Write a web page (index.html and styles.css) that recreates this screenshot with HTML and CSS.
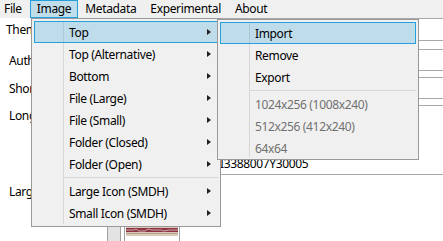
FILE: index.html
```html
<!DOCTYPE html>
<html lang="en">
<head>
  <meta charset="UTF-8">
  <meta name="viewport" content="width=device-width, initial-scale=1.0">
  <title>Theme Editor</title>
  <link rel="stylesheet" href="styles.css">
</head>
<body>
  <div class="window">
    <div class="menubar">
      <div class="menubar-item first">File</div>
      <div class="menubar-item open">Image</div>
      <div class="menubar-item">Metadata</div>
      <div class="menubar-item">Experimental</div>
      <div class="menubar-item">About</div>
    </div>

    <div class="form">
      <div class="row row-theme">
        <div class="label label-theme">Theme</div>
        <div class="field"></div>
      </div>
      <div class="row row-author">
        <div class="label">Author</div>
        <div class="field"></div>
      </div>
      <div class="row row-short">
        <div class="label">Short</div>
        <div class="field"></div>
      </div>
      <div class="row row-long">
        <div class="label">Long</div>
        <div class="field field-multi">
          <span class="code">I3388007Y30005</span>
        </div>
      </div>
      <div class="row row-icon-label">
        <div class="label">Large</div>
      </div>
      <div class="row row-icons">
        <div class="icon-small"></div>
        <div class="icon-large">
          <svg width="52" height="9" viewBox="0 0 52 9">
            <rect width="52" height="9" fill="#d9cbb8"/>
            <rect y="1" width="52" height="4" fill="#8e3444"/>
            <path d="M0 3h8l2-1 3 2h6l3-2 4 1h9l3 1 5-1h9" stroke="#c9a9a4" stroke-width="1" fill="none"/>
            <rect y="6" width="52" height="1" fill="#b89a90"/>
          </svg>
        </div>
      </div>
    </div>

    <!-- Image menu -->
    <div class="popup popup-main">
      <div class="item active">Top<span class="arrow"></span></div>
      <div class="item">Top (Alternative)<span class="arrow"></span></div>
      <div class="item">Bottom<span class="arrow"></span></div>
      <div class="item">File (Large)<span class="arrow"></span></div>
      <div class="item">File (Small)<span class="arrow"></span></div>
      <div class="item">Folder (Closed)<span class="arrow"></span></div>
      <div class="item">Folder (Open)<span class="arrow"></span></div>
      <div class="separator"></div>
      <div class="item">Large Icon (SMDH)<span class="arrow"></span></div>
      <div class="item">Small Icon (SMDH)<span class="arrow"></span></div>
    </div>

    <!-- Top submenu -->
    <div class="popup popup-sub">
      <div class="item active">Import</div>
      <div class="item">Remove</div>
      <div class="item">Export</div>
      <div class="separator"></div>
      <div class="item disabled">1024x256 (1008x240)</div>
      <div class="item disabled">512x256 (412x240)</div>
      <div class="item disabled">64x64</div>
    </div>
  </div>
</body>
</html>
```

FILE: styles.css
```css
body {
  margin: 0;
  font-family: "Noto Sans", "Open Sans", sans-serif;
  font-size: 12px;
  letter-spacing: -0.35px;
  color: #000000;
  background-color: #ffffff;
}
.window {
  position: relative;
  width: 443px;
  height: 241px;
  overflow: hidden;
  background-color: #ffffff;
}

/* menu bar */
.menubar {
  display: flex;
  height: 18px;
  background-color: #f0f0f0;
}
.menubar-item {
  line-height: 16px;
  padding: 0 6px;
  border: 1px solid transparent;
  white-space: nowrap;
}
.menubar-item.first {
  padding-left: 3px;
  padding-right: 7px;
}
.menubar-item.open {
  background-color: #c0ddeb;
  border-color: #26a0da;
}

/* form behind the menus */
.form {
  display: flex;
  flex-direction: column;
}
.row {
  display: flex;
  align-items: center;
}
.label {
  width: 95px;
  padding-left: 9px;
  white-space: nowrap;
}
.label-theme {
  padding-left: 6px;
  width: 98px;
}
.field {
  flex: 1;
  align-self: stretch;
  margin-right: -20px;
  border: 1px solid #a9a9a9;
}
.row-theme {
  height: 23px;
}
.row-author {
  height: 22px;
  margin-top: 8px;
}
.row-short {
  height: 22px;
  margin-top: 6px;
}
.row-long {
  height: 70px;
  margin-top: 6px;
  align-items: flex-start;
}
.row-long .label {
  line-height: 22px;
}
.field-multi {
  display: flex;
  align-items: flex-end;
  padding-bottom: 3px;
}
.code {
  padding-left: 115px;
  line-height: 14px;
}
.row-icon-label {
  height: 22px;
  margin-top: 5px;
}
.row-icons {
  margin-top: 23px;
  padding-left: 107px;
  align-items: flex-start;
  gap: 3px;
}
.icon-small {
  width: 12px;
  height: 20px;
  border: 1px solid #a0a0a0;
  background-color: #e3e3e3;
}
.icon-large {
  width: 52px;
  height: 20px;
  padding: 1px;
  border: 1px solid #a0a0a0;
  background-color: #ffffff;
}
.icon-large svg {
  display: block;
}

/* dropdown popups */
.popup {
  position: absolute;
  box-sizing: border-box;
  border: 1px solid #999999;
  background-color: #f0f0f0;
  padding: 2px;
}
.popup::before {
  content: "";
  position: absolute;
  left: 31px;
  top: 2px;
  bottom: 2px;
  width: 1px;
  background-color: #d7d7d7;
}
.popup-main {
  left: 31px;
  top: 18px;
  width: 190px;
}
.popup-sub {
  left: 217px;
  top: 19px;
  width: 202px;
  padding-bottom: 0;
}
.item {
  position: relative;
  height: 22px;
  box-sizing: border-box;
  display: flex;
  align-items: center;
  padding-left: 34px;
  border: 1px solid transparent;
  white-space: nowrap;
}
.item.active {
  background-color: rgba(38, 160, 218, 0.24);
  border-color: #26a0da;
}
.item.disabled {
  color: #707070;
}
.arrow {
  position: absolute;
  right: 6px;
  top: 7px;
  width: 0;
  height: 0;
  border-left: 4px solid #212121;
  border-top: 3.5px solid transparent;
  border-bottom: 3.5px solid transparent;
}
.separator {
  height: 1px;
  margin: 2px 0 2px 30px;
  background-color: #d7d7d7;
}
```
